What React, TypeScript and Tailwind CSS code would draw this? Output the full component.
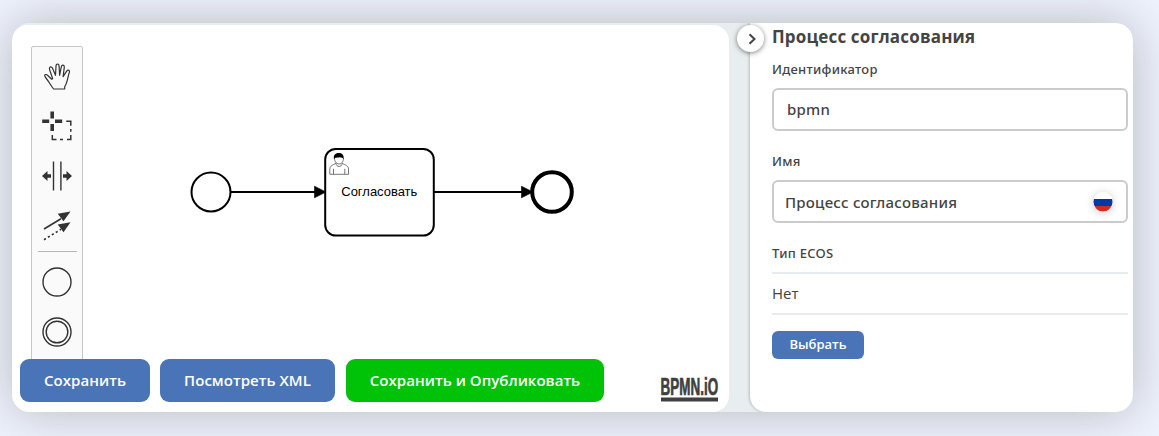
import React from 'react';

const ink = '#333333';

function HandIcon() {
  return (
    <svg className="h-[50px] w-[50px]" viewBox="0 0 50 50" fill="none" stroke={ink} strokeWidth="1.2" strokeLinejoin="round">
      <path d="M21.6 38 C18.8 34.5 17.2 31 14.3 27.5 C11.3 23.9 13.2 22.3 15.8 24.5 L19.7 28.2 L20.6 27.7 C19.8 24 17.5 20 17.4 17.6 C17.4 15.6 19.5 15.2 20.4 17.1 L23.5 24.3 L24 15.3 C24 12.2 27 12.2 27.1 15.3 L27.6 24.3 L29.3 15.8 C30 13.1 32.6 13.9 32.3 16.3 L31.1 25.6 L34.7 20.2 C36.1 18.3 38 19.4 37.4 21.3 C35.8 25.2 35.5 31.8 32.7 35.6 V38 Z" />
    </svg>
  );
}

function LassoIcon() {
  return (
    <svg className="h-[50px] w-[50px]" viewBox="0 0 50 50" fill="none" stroke={ink}>
      <path d="M20.200 10.500v7M20.200 23v7M10.200 20.200h7M23 20.200h7.200" strokeWidth="3.6" />
      <path d="M34.200 20.200H38.800V24.700M38.800 28V30.700M38.800 34V38.500H35M31 38.500H28M24.500 38.500H20.300V34" strokeWidth="1.5" />
    </svg>
  );
}

function SpaceIcon() {
  return (
    <svg className="h-[50px] w-[50px]" viewBox="0 0 50 50" fill={ink}>
      <path d="M20.800 10.500h1.400v29h-1.400zM28.200 10.500h1.400v29h-1.400z" />
      <path d="M10 25l5.500-5v3.300h3.500v3.400h-3.500v3.300zM40 25l-5.500-5v3.300H31v3.400h3.500v3.300z" />
    </svg>
  );
}

function ConnectIcon() {
  return (
    <svg className="h-[50px] w-[50px]" viewBox="0 0 50 50" fill={ink} stroke={ink}>
      <path d="M12 28L29 17.700" strokeWidth="1.6" />
      <path d="M12 38.700L29 28.300" strokeWidth="1.6" strokeDasharray="2.2 2.4" />
      <path d="M38.500 10.500L31.500 20.300l-5.800-7.600zM38.500 21.200L31.500 31.300l-5.800-7.800z" stroke="none" />
    </svg>
  );
}

function CircleIcon({ double }: { double?: boolean }) {
  return (
    <svg className="h-[50px] w-[50px]" viewBox="0 0 50 50" fill="none" stroke={ink} strokeWidth="1.4">
      <circle cx="25" cy="25" r="14" />
      {double && <circle cx="25" cy="25" r="10.8" />}
    </svg>
  );
}

function Palette() {
  return (
    <div className="ml-[19px] mt-[21px] flex h-[340px] w-[52px] shrink-0 flex-col items-center rounded-[2px] border border-[#c6c6c6] bg-[#fafafa] pt-1">
      <HandIcon />
      <LassoIcon />
      <SpaceIcon />
      <ConnectIcon />
      <div className="mb-[5px] h-px w-[39px] shrink-0 bg-[#b6b6b6]" />
      <CircleIcon />
      <CircleIcon double />
    </div>
  );
}

function Diagram() {
  return (
    <svg className="mt-[101px] ml-[97px] h-[120px] w-[410px] shrink-0" viewBox="180 126 410 120" fill="none" stroke="#000" strokeWidth="2">
      <circle cx="211" cy="192" r="19.5" />
      <path d="M231 192H318M434 192H525" />
      <path d="M314.5 186.2L326 192l-11.500 5.800zM521.500 186.200L533 192l-11.500 5.800z" fill="#000" strokeWidth="0.6" />
      <rect x="325.200" y="149" width="108.600" height="86.500" rx="10.500" />
      <circle cx="552" cy="192" r="19.800" strokeWidth="4" />
      <g stroke="#555" strokeWidth="0.8">
        <path d="M336 163.300C333 165 329.800 165.700 329.800 169V174.300H348.500V169C348.500 165.700 345.200 165 342.200 163.300M333.500 174.300V168.800M344.800 174.300V168.800M336 163.300C336 167.500 342.200 167.500 342.200 163.300" />
        <path d="M334.500 158C334.500 161 336 164 339 164S343.500 161 343.500 158" />
      </g>
      <path d="M334 159.300C333.200 155.300 335 152.900 338.800 152.900S344.300 155.500 343.500 159.300C342.500 157.200 341.500 157.800 339.500 157.300C337.500 158 335 157 334 159.300Z" fill="#000" stroke="none" />
      <text x="379.300" y="196" textAnchor="middle" fill="#000" stroke="none" className="font-['Liberation_Sans'] text-[13px]" textLength="76" lengthAdjust="spacingAndGlyphs">Согласовать</text>
    </svg>
  );
}

function Logo() {
  return (
    <svg className="mb-[5px] ml-auto mr-[4px] h-[38px] w-[67px] self-end" viewBox="-2 -8 67 38" fill="#404040">
      <text transform="translate(0.6 17.500) scale(0.585 1)" stroke="#404040" strokeWidth="0.7" className="font-['Liberation_Sans'] text-[23px] font-bold">BPMN.iO</text>
      <rect x="1" y="20.500" width="57" height="4" />
    </svg>
  );
}

const action = 'flex h-[43px] items-center justify-center rounded-[9px] text-[15px] font-semibold tracking-[0.04px] text-white whitespace-nowrap';
const label = "font-['Noto_Sans'] text-[13px] font-medium leading-5 tracking-[0.27px]";
const field = "flex h-[43px] items-center rounded-md border-2 border-[#cbcbcb] font-['Noto_Sans'] text-[15px] font-medium tracking-[0.24px]";

function Editor() {
  return (
    <section className="relative mt-[2px] h-[387px] w-[717px] shrink-0 overflow-hidden rounded-2xl bg-white">
      <div className="flex items-start">
        <Palette />
        <Diagram />
      </div>
      <div className="absolute inset-x-0 bottom-0 flex pl-2">
        <button className={action + ' w-[130px] bg-[#4a74b8]'}>Сохранить</button>
        <button className={action + ' ml-[10px] w-[175px] bg-[#4a74b8]'}>Посмотреть XML</button>
        <button className={action + ' mb-[10px] ml-[11px] w-[258px] bg-[#00c308]'}>Сохранить и Опубликовать</button>
        <Logo />
      </div>
    </section>
  );
}

function Flag() {
  return (
    <svg className="h-5 w-5 rounded-full bg-white shadow-[0_1px_9px_rgba(0,0,0,0.2)]" viewBox="0 0 20 20">
      <path d="M.8 7H19.200Q20.200 10.500 18.500 14H1.500Q-.2 10.500.8 7Z" fill="#0039a6" />
      <path d="M1.500 14H18.500A9.300 9.300 0 0 1 1.500 14Z" fill="#d52b1e" />
    </svg>
  );
}

function Properties() {
  return (
    <aside className="relative min-w-0 flex-1 rounded-bl-2xl bg-white pl-[22px] pr-[5px] text-[#444444] shadow-[-1px_0_3px_rgba(0,0,0,0.2)]">
      <button className="absolute -left-[13px] top-[2px] flex h-[27px] w-[27px] items-center justify-center rounded-full bg-white shadow-[0_1px_5px_rgba(0,0,0,0.5)]">
        <svg className="ml-[2px] h-3 w-3" viewBox="0 0 12 12" fill="none" stroke="#444" strokeWidth="2">
          <path d="M3.500 1.200L8.500 6 3.500 10.800" />
        </svg>
      </button>
      <h1 className="h-[36px] pt-[2px] text-[17px] font-bold leading-6 tracking-[0.16px]">Процесс согласования</h1>
      <label className={label + ' block h-[29px]'}>Идентификатор</label>
      <div className={field + ' px-[13px]'}>bpmn</div>
      <label className={label + ' mt-[20px] block h-[29px]'}>Имя</label>
      <div className={field + ' justify-between pl-[11px] pr-[13px]'}>
        <span className="pt-px">Процесс согласования</span>
        <Flag />
      </div>
      <div className={label + ' mt-[20px] h-[29px]'}>Тип ECOS</div>
      <div className="flex h-[43px] items-center border-y-2 border-[#e8ecef] text-[15px]">Нет</div>
      <button className="mt-4 flex h-7 w-[92px] items-center justify-center rounded-md bg-[#4a74b8] text-[13px] font-semibold text-white">Выбрать</button>
    </aside>
  );
}

export default function App() {
  return (
    <div className="h-[436px] w-full overflow-hidden bg-[#eef2fc] pl-3 pt-[23px] font-['Open_Sans','Noto_Sans',sans-serif]">
      <main className="h-[389px] w-[1121px] rounded-[18px] shadow-[0_0_50px_rgba(0,0,0,0.24)]">
        <div className="flex h-full overflow-hidden rounded-[18px] bg-[#e8edef]">
          <Editor />
          <div className="w-[21px] shrink-0" />
          <Properties />
        </div>
      </main>
    </div>
  );
}
